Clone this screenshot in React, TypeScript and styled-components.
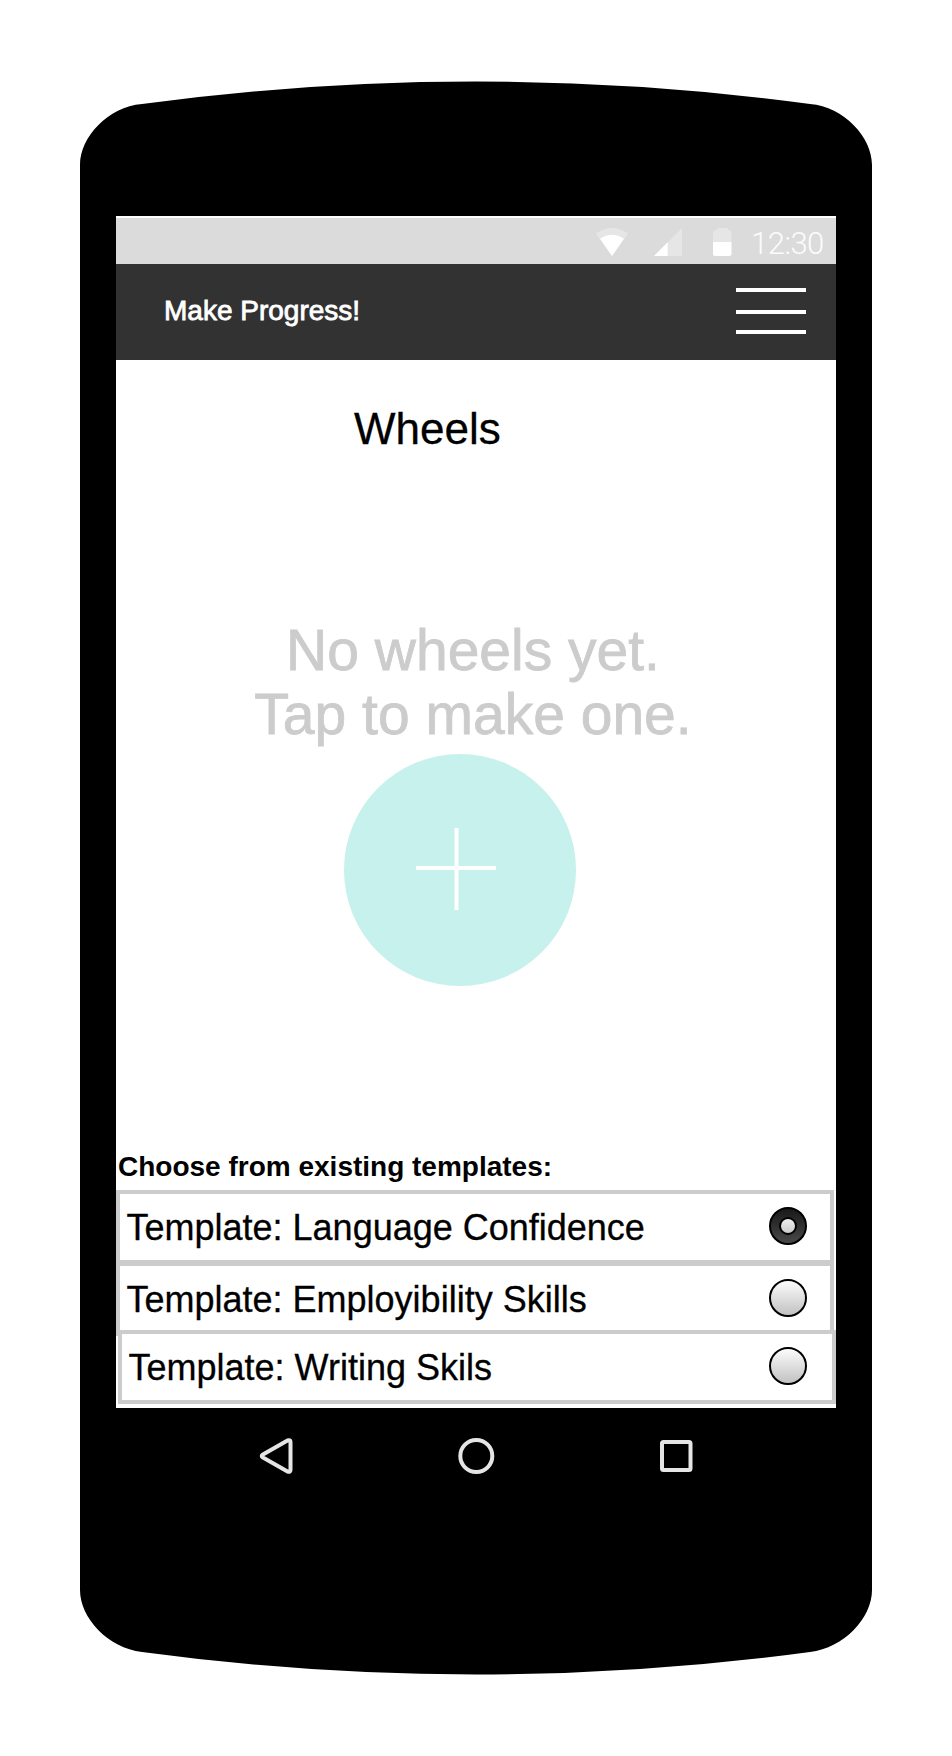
import React, { useState } from "react";
import styled, { createGlobalStyle, css } from "styled-components";

const GlobalStyle = createGlobalStyle`
  *, *::before, *::after { box-sizing: border-box; }
  body { margin: 0; background: #fff; }
`;

const Page = styled.div`
  width: 952px;
  height: 1756px;
  display: grid;
  overflow: hidden;
  background: #fff;
  color: #000;
  font-family: "Liberation Sans", Arial, sans-serif;
`;

const DeviceShell = styled.svg`
  grid-area: 1 / 1;
  display: block;
`;

const Device = styled.div`
  grid-area: 1 / 1;
  z-index: 1;
  display: flex;
  flex-direction: column;
  width: 720px;
  margin: 216px 0 0 116px;
`;

const Screen = styled.main`
  display: flex;
  flex-direction: column;
  height: 1192px;
  padding-top: 2px;
  background: #fff;
`;

const StatusBar = styled.div`
  display: flex;
  flex: none;
  align-items: center;
  justify-content: flex-end;
  height: 46px;
  padding-right: 11px;
  background: #dbdbdb;
`;

const StatusIcon = styled.svg<{ $gap: number }>`
  flex: none;
  height: 28px;
  margin: 2px ${(p) => p.$gap}px 0 0;
`;

const Clock = styled.span`
  width: 74px;
  color: #fcfcfc;
  font: 300 31px/46px Roboto, sans-serif;
  letter-spacing: -0.5px;
  padding-top: 6px;
  white-space: nowrap;
`;

const Header = styled.header`
  display: flex;
  flex: none;
  justify-content: space-between;
  height: 96px;
  padding: 24px 30px 0 48px;
  background: #323232;
`;

const AppName = styled.div`
  color: #fff;
  font-size: 28px;
  line-height: 46px;
  -webkit-text-stroke: 0.8px #fff;
`;

const MenuButton = styled.button`
  display: flex;
  flex-direction: column;
  width: 70px;
  height: 46px;
  padding: 0;
  border: 0;
  background: none;
`;

const MenuLine = styled.span<{ $gap?: number }>`
  width: 70px;
  height: 4px;
  margin-bottom: ${(p) => p.$gap ?? 0}px;
  background: #fff;
`;

const Heading = styled.h1`
  margin: 43px 0 0 238px;
  font-size: 44px;
  font-weight: 400;
  line-height: 52px;
  -webkit-text-stroke: 0.3px;
`;

const EmptyState = styled.section`
  display: flex;
  flex-direction: column;
  flex: none;
  height: 532px;
  margin-top: 163px;
`;

const EmptyText = styled.p`
  width: 714px;
  height: 136px;
  margin: 0;
  color: #ccc;
  font-size: 57px;
  line-height: 64px;
  text-align: center;
  -webkit-text-stroke: 0.8px;
`;

const AddButton = styled.button`
  width: 232px;
  height: 232px;
  margin-left: 228px;
  padding: 0;
  border: 0;
  border-radius: 50%;
  background: #c7f1ec;

  svg { display: block; }
`;

const ListTitle = styled.h2`
  flex: none;
  height: 40px;
  margin: 0 0 0 2px;
  font-size: 28px;
  font-weight: 700;
  line-height: 34px;
`;

const TemplateRow = styled.label<{ $overlap?: number; $shift?: number }>`
  display: flex;
  flex: none;
  align-items: center;
  justify-content: space-between;
  width: 718px;
  height: 74px;
  margin: -${(p) => p.$overlap ?? 0}px 0 0 ${(p) => p.$shift ?? 0}px;
  padding: 0 ${(p) => 23 + (p.$shift ?? 0)}px 2px 6.5px;
  border: 4px solid #ccc;
  background: #fff;
`;

const TemplateName = styled.span`
  padding-top: 4px;
  font-size: 36px;
  line-height: 42px;
  -webkit-text-stroke: 0.3px;
`;

const Radio = styled.input.attrs({ type: "radio", name: "template" })`
  appearance: none;
  display: grid;
  place-items: center;
  width: 38px;
  height: 38px;
  margin: 0;
  border: 2px solid #000;
  border-radius: 50%;
  background: linear-gradient(#fff, #bebebe) border-box;

  ${(p) =>
    p.checked &&
    css`
      background: linear-gradient(#161616, #4b4b4b) border-box;

      &::after {
        content: "";
        width: 18px;
        height: 18px;
        border: 2px solid #000;
        border-radius: 50%;
        background: linear-gradient(#eee, #ccc);
      }
    `}
`;

const NavBar = styled.nav`
  display: flex;
  justify-content: space-between;
  padding: 28px 142px 0;
`;

const NavIcon = styled.svg`
  width: 40px;
  height: 40px;
  fill: none;
  stroke: #e5e5e5;
  stroke-width: 4;
  stroke-linejoin: round;
`;

const templates = [
  { name: "Language Confidence", overlap: 0, shift: 0 },
  { name: "Employibility Skills", overlap: 2, shift: 0 },
  { name: "Writing Skils", overlap: 6, shift: 2 },
];

export default function App() {
  const [selected, setSelected] = useState(0);

  return (
    <Page>
      <GlobalStyle />
      <DeviceShell width="952" height="1756" viewBox="0 0 952 1756">
        <path d="M80 165C80 137 108 107 142 104Q308 81.500 476 81.500T810 104C844 107 872 137 872 165V1590C872 1618 844 1648 810 1652Q644 1674.500 476 1674.500T142 1652C108 1648 80 1618 80 1590Z" />
      </DeviceShell>
      <Device>
        <Screen>
          <StatusBar>
            <StatusIcon $gap={25.5} width="32" viewBox="0 0 32 28">
              <path fill="#e6e6e6" d="M0 5.500Q16-5.500 32 5.500L16 28Z" />
              <path fill="#fff" d="M4 10.700Q16 3 28 10.700L16 28Z" />
            </StatusIcon>
            <StatusIcon $gap={31.5} width="28" viewBox="0 0 28 28">
              <path fill="#e6e6e6" d="M0 28L28 0V28Z" />
              <path fill="#fff" d="M0 28L13.700 14.300V28Z" />
            </StatusIcon>
            <StatusIcon $gap={19} width="19" viewBox="0 0 19 28">
              <path fill="#e6e6e6" d="M4 2V0H15V2Q18.500 2 18.500 5V14H0V5Q0 2 4 2Z" />
              <path fill="#fff" d="M0 14H18.500V26Q18.500 28 16.500 28H2Q0 28 0 26Z" />
            </StatusIcon>
            <Clock>12:30</Clock>
          </StatusBar>
          <Header>
            <AppName>Make Progress!</AppName>
            <MenuButton aria-label="Menu">
              <MenuLine $gap={18} />
              <MenuLine $gap={16} />
              <MenuLine />
            </MenuButton>
          </Header>
          <Heading>Wheels</Heading>
          <EmptyState>
            <EmptyText>
              No wheels yet.
              <br />
              Tap to make one.
            </EmptyText>
            <AddButton aria-label="Make a wheel">
              <svg width="232" height="232" viewBox="0 0 232 232">
                <path d="M72 114H152M112.500 74V156" stroke="#fff" strokeWidth="4" />
              </svg>
            </AddButton>
          </EmptyState>
          <ListTitle>Choose from existing templates:</ListTitle>
          {templates.map((t, i) => (
            <TemplateRow key={t.name} $overlap={t.overlap} $shift={t.shift}>
              <TemplateName>Template: {t.name}</TemplateName>
              <Radio checked={selected === i} onChange={() => setSelected(i)} />
            </TemplateRow>
          ))}
        </Screen>
        <NavBar>
          <NavIcon viewBox="0 0 40 40">
            <path d="M4.500 18.700Q3 20 4.500 21.300L29.500 35.500Q32.500 36.500 32.500 34V6Q32.500 3.500 29.500 4.500Z" />
          </NavIcon>
          <NavIcon viewBox="0 0 40 40">
            <circle cx="20.300" cy="20" r="16" />
          </NavIcon>
          <NavIcon viewBox="0 0 40 40">
            <rect x="8" y="6" width="28.500" height="28" rx="1.500" />
          </NavIcon>
        </NavBar>
      </Device>
    </Page>
  );
}
